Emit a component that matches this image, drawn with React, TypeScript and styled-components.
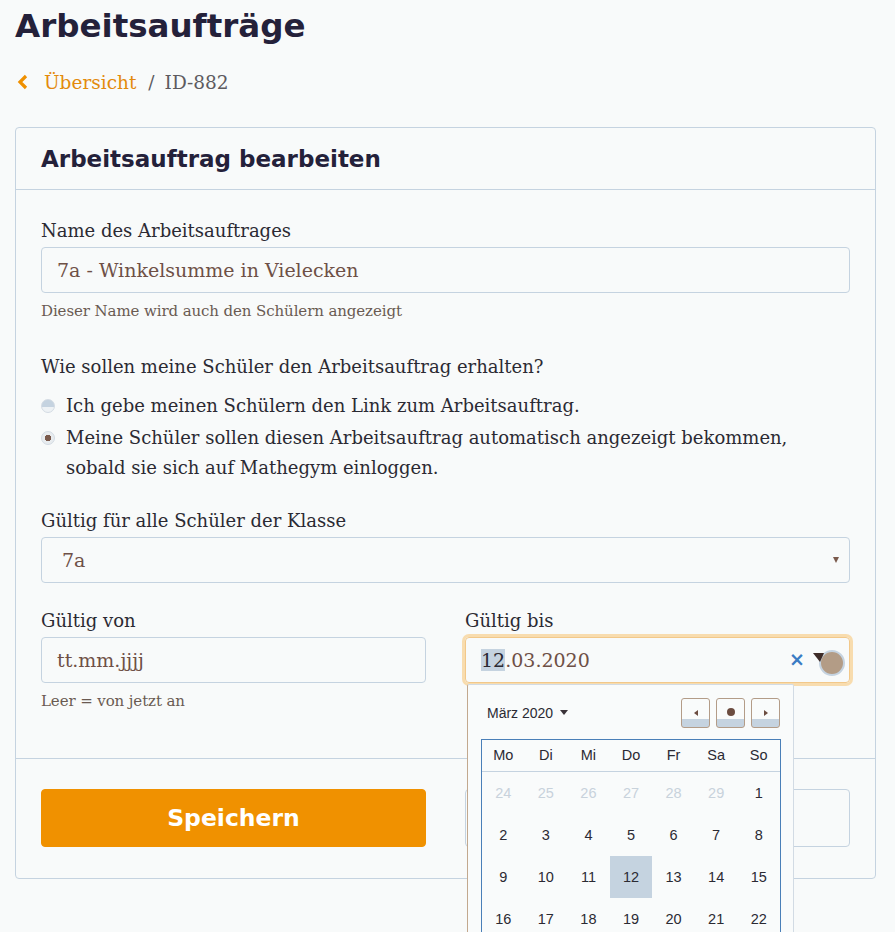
import React from 'react';
import styled, { createGlobalStyle } from 'styled-components';

const GlobalStyle = createGlobalStyle`
  html, body {
    margin: 0;
    padding: 0;
    background: #f8fafa;
  }
  body {
    font-family: "DejaVu Serif", serif;
    color: #2b2a33;
  }
`;

const Page = styled.div`
  padding: 0 19px 60px 15px;
  width: 861px;
`;

const Title = styled.h1`
  margin: 0;
  padding-top: 4px;
  font-family: "DejaVu Sans", sans-serif;
  font-weight: 700;
  font-size: 32.5px;
  line-height: 44px;
  color: #24213a;
`;

const Crumbs = styled.nav`
  display: flex;
  align-items: center;
  height: 26px;
  margin: 21px 0 0 2px;
  font-size: 18.5px;
  color: #5d5a5f;
`;

const CrumbLink = styled.a`
  color: #e38a0c;
  margin-left: 15px;
`;

const Sep = styled.span`
  margin: 0 10px 0 12px;
`;

const Card = styled.section`
  margin-top: 32px;
  border: 1px solid #c5d3e0;
  border-radius: 4px;
`;

const CardHead = styled.header`
  height: 61px;
  display: flex;
  align-items: center;
  padding: 0 25px;
  border-bottom: 1px solid #c5d3e0;
`;

const CardTitle = styled.h2`
  margin: 0;
  font-family: "DejaVu Sans", sans-serif;
  font-weight: 700;
  font-size: 23px;
  color: #24213a;
`;

const CardBody = styled.div`
  padding: 28px 25px 47px;
  border-bottom: 1px solid #c5d3e0;
`;

const Label = styled.div<{ $top?: number }>`
  margin-top: ${(p) => p.$top ?? 0}px;
  font-size: 18px;
  line-height: 26px;
  color: #2b2a33;
`;

const Field = styled.div<{ $focus?: boolean; $inset?: number }>`
  position: relative;
  margin-top: 3px;
  height: 44px;
  border: 1px solid ${(p) => (p.$focus ? '#f2c88a' : '#c5d3e0')};
  border-radius: 4px;
  box-shadow: ${(p) => (p.$focus ? '0 0 0 3px #f8dcae' : 'none')};
  display: flex;
  align-items: center;
  padding: 0 ${(p) => p.$inset ?? 15}px;
  font-size: 19px;
  color: #6e5046;
`;

const Help = styled.div`
  margin-top: 8px;
  font-size: 15px;
  line-height: 20px;
  letter-spacing: -0.1px;
  color: #6a5a52;
`;

const Options = styled.div`
  margin-top: 11px;
  display: flex;
  flex-direction: column;
  gap: 2px;
`;

const Option = styled.label`
  display: flex;
  gap: 11px;
  font-size: 18px;
  line-height: 30px;
`;

const Radio = styled.span<{ $checked?: boolean }>`
  flex: none;
  width: 12px;
  height: 12px;
  margin-top: 8px;
  border-radius: 50%;
  border: 1px solid #d3dbe3;
  background: ${(p) =>
    p.$checked
      ? 'radial-gradient(circle, #7a5a4c 0 3px, #e8ecef 3.5px)'
      : 'linear-gradient(#c5d3e0 55%, #eef2f5 55%)'};
`;

const Arrow = styled.span`
  position: absolute;
  right: 10px;
  top: 19px;
  width: 0;
  height: 0;
  border-left: 3.5px solid transparent;
  border-right: 3.5px solid transparent;
  border-top: 6px solid #7a5a4c;
`;

const Cols = styled.div`
  display: grid;
  grid-template-columns: 1fr 1fr;
  column-gap: 39px;
  margin-top: 25px;
`;

const Col = styled.div`
  position: relative;
`;

const Sel = styled.span`
  background: #c5d3e0;
  color: #2b2a33;
`;

const Clear = styled.span`
  position: absolute;
  right: 44px;
  top: 10px;
  font-family: "DejaVu Sans", sans-serif;
  font-weight: 700;
  font-size: 19px;
  color: #3a7cc4;
`;

const Toggle = styled.svg`
  position: absolute;
  right: 4px;
  top: 10px;
`;

const Footer = styled.footer`
  display: grid;
  grid-template-columns: 1fr 1fr;
  column-gap: 39px;
  padding: 30px 25px 31px;
`;

const Button = styled.button<{ $primary?: boolean }>`
  height: 58px;
  border-radius: 4px;
  border: 1px solid ${(p) => (p.$primary ? '#f09100' : '#c5d3e0')};
  background: ${(p) => (p.$primary ? '#f09100' : 'transparent')};
  color: #fff;
  font-family: "DejaVu Sans", sans-serif;
  font-weight: 700;
  font-size: 23.5px;
`;

const Popover = styled.div`
  position: absolute;
  left: 1px;
  top: 46px;
  width: 327px;
  height: 262px;
  border: 1px solid #d2dbe4;
  border-left-color: #c2a88e;
  border-radius: 2px;
  background: #f9fbfb;
  padding: 12px 13px 0 13px;
  box-sizing: border-box;
  font-family: "Liberation Sans", Arial, sans-serif;
  z-index: 2;
`;

const CalHead = styled.div`
  display: flex;
  align-items: center;
  justify-content: space-between;
  height: 31px;
  padding-left: 6px;
`;

const Month = styled.span`
  display: flex;
  align-items: center;
  gap: 7px;
  font-size: 14px;
  color: #2b2a33;
`;

const Caret = styled.span`
  border-left: 4px solid transparent;
  border-right: 4px solid transparent;
  border-top: 5px solid #3a3338;
`;

const NavGroup = styled.div`
  display: flex;
  gap: 6px;
`;

const NavBtn = styled.span`
  position: relative;
  width: 27px;
  height: 28px;
  border: 1px solid #b39c88;
  border-radius: 3px;
  background: linear-gradient(#f9fbfb 70%, #c5d3e0 70%);
  display: flex;
  align-items: center;
  justify-content: center;
`;

const Table = styled.div`
  margin-top: 11px;
  border: 1px solid #4a7fb8;
  display: grid;
  grid-template-columns: repeat(7, 1fr);
  width: 300px;
  box-sizing: border-box;
`;

const HeadCell = styled.div`
  height: 31px;
  line-height: 31px;
  text-align: center;
  font-size: 14.5px;
  color: #2b2a33;
  border-bottom: 1px solid #c5d3e0;
`;

const Day = styled.div<{ $muted?: boolean; $active?: boolean }>`
  height: 42px;
  line-height: 42px;
  text-align: center;
  font-size: 14.5px;
  color: ${(p) => (p.$muted ? '#c8d2db' : '#2b2a33')};
  background: ${(p) => (p.$active ? '#c5d3e0' : 'transparent')};
`;

const weekdays = ['Mo', 'Di', 'Mi', 'Do', 'Fr', 'Sa', 'So'];
const days: { d: number; muted?: boolean }[] = [
  ...[24, 25, 26, 27, 28, 29].map((d) => ({ d, muted: true })),
  ...Array.from({ length: 22 }, (_, i) => ({ d: i + 1 })),
];

export default function App() {
  return (
    <>
      <GlobalStyle />
      <Page>
        <Title>Arbeitsaufträge</Title>
        <Crumbs>
          <svg width="12" height="16" viewBox="0 0 12 16">
            <polyline points="9,2 3,8 9,14" fill="none" stroke="#ef9000" strokeWidth="3.2" />
          </svg>
          <CrumbLink>Übersicht</CrumbLink>
          <Sep>/</Sep>
          <span>ID-882</span>
        </Crumbs>

        <Card>
          <CardHead>
            <CardTitle>Arbeitsauftrag bearbeiten</CardTitle>
          </CardHead>
          <CardBody>
            <Label>Name des Arbeitsauftrages</Label>
            <Field>7a - Winkelsumme in Vielecken</Field>
            <Help>Dieser Name wird auch den Schülern angezeigt</Help>

            <Label $top={33}>Wie sollen meine Schüler den Arbeitsauftrag erhalten?</Label>
            <Options>
              <Option>
                <Radio />
                <span>Ich gebe meinen Schülern den Link zum Arbeitsauftrag.</span>
              </Option>
              <Option>
                <Radio $checked />
                <span>
                  Meine Schüler sollen diesen Arbeitsauftrag automatisch angezeigt bekommen,
                  sobald sie sich auf Mathegym einloggen.
                </span>
              </Option>
            </Options>

            <Label $top={25}>Gültig für alle Schüler der Klasse</Label>
            <Field $inset={20}>
              7a
              <Arrow />
            </Field>

            <Cols>
              <Col>
                <Label>Gültig von</Label>
                <Field>tt.mm.jjjj</Field>
                <Help>Leer = von jetzt an</Help>
              </Col>
              <Col>
                <Label>Gültig bis</Label>
                <Field $focus>
                  <span>
                    <Sel>12</Sel>.03.2020
                  </span>
                  <Clear>×</Clear>
                  <Toggle width="34" height="28" viewBox="0 0 34 28">
                    <circle cx="21" cy="15" r="12" fill="#b39c86" stroke="#c5d3e0" strokeWidth="2" />
                    <polygon points="2,5 13,5 9,14" fill="#3e2c28" />
                  </Toggle>
                  <Popover>
                    <CalHead>
                      <Month>
                        März 2020
                        <Caret />
                      </Month>
                      <NavGroup>
                        <NavBtn>
                          <svg width="8" height="8" viewBox="0 0 8 8">
                            <polygon points="6,1 2,4 6,7" fill="#6b4c40" />
                          </svg>
                        </NavBtn>
                        <NavBtn>
                          <svg width="10" height="10" viewBox="0 0 10 10">
                            <circle cx="5" cy="4" r="4" fill="#6b4c40" />
                          </svg>
                        </NavBtn>
                        <NavBtn>
                          <svg width="8" height="8" viewBox="0 0 8 8">
                            <polygon points="2,1 6,4 2,7" fill="#6b4c40" />
                          </svg>
                        </NavBtn>
                      </NavGroup>
                    </CalHead>
                    <Table>
                      {weekdays.map((w) => (
                        <HeadCell key={w}>{w}</HeadCell>
                      ))}
                      {days.map((x) => (
                        <Day key={`${x.d}-${x.muted}`} $muted={x.muted} $active={!x.muted && x.d === 12}>
                          {x.d}
                        </Day>
                      ))}
                    </Table>
                  </Popover>
                </Field>
              </Col>
            </Cols>
          </CardBody>
          <Footer>
            <Button $primary>Speichern</Button>
            <Button />
          </Footer>
        </Card>
      </Page>
    </>
  );
}
